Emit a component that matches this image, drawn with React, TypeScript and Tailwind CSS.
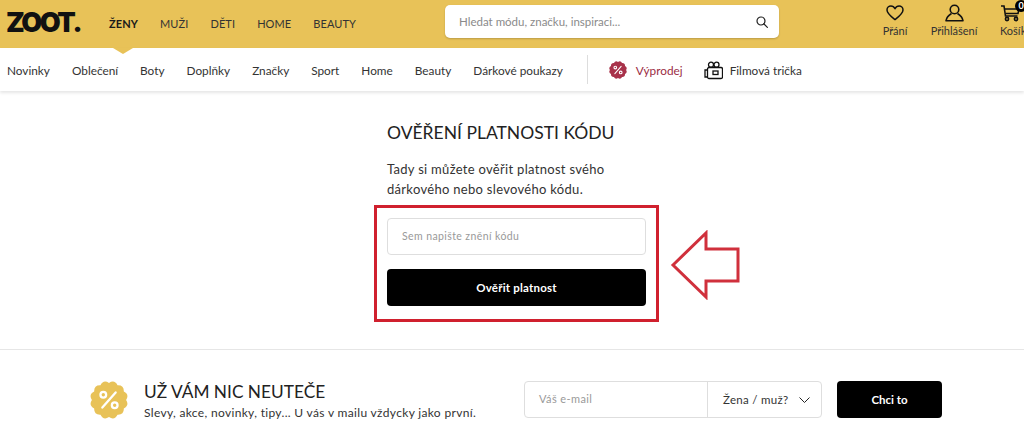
const top = [
  { t: "ŽENY", cls: "font-bold text-[#1a1a1a]" },
  { t: "MUŽI", cls: "text-[#333]" },
  { t: "DĚTI", cls: "text-[#333]" },
  { t: "HOME", cls: "text-[#333]" },
  { t: "BEAUTY", cls: "text-[#333]" },
];
const sub = ["Novinky", "Oblečení", "Boty", "Doplňky", "Značky", "Sport", "Home", "Beauty", "Dárkové poukazy"];

function Badge({ fill, size, pct }: { fill: string; size: number; pct: string }) {
  const n = 12;
  let d = "";
  for (let i = 0; i < n; i++) {
    const a = (i / n) * Math.PI * 2 - Math.PI / 2;
    const b = ((i + 0.5) / n) * Math.PI * 2 - Math.PI / 2;
    const c = ((i + 1) / n) * Math.PI * 2 - Math.PI / 2;
    const p = (r: number, x: number) => `${(20 + r * Math.cos(x)).toFixed(2)} ${(20 + r * Math.sin(x)).toFixed(2)}`;
    if (i === 0) d += `M${p(18, a)} `;
    d += `Q${p(22.5, b)} ${p(18, c)} `;
  }
  return (
    <svg width={size} height={size} viewBox="0 0 40 40" className="shrink-0">
      <path d={d + "Z"} fill={fill} />
      <g stroke={pct} strokeWidth="2.400" fill="none">
        <path d="M27 12 13 28" strokeLinecap="round" />
        <circle cx="14" cy="14.500" r="3" />
        <circle cx="26" cy="25.500" r="3" />
      </g>
    </svg>
  );
}

export default function App() {
  return (
    <div className="relative w-[1024px] h-[439px] overflow-hidden bg-white text-[#222] font-['Lato','Open_Sans',sans-serif]">
      <header className="h-12 bg-[#e8c258] flex items-center relative">
        <div className="ml-[6px] w-[74px] text-[27px] leading-none font-black tracking-[-2.5px] text-[#111] font-['Inter',sans-serif] mt-[-4px] whitespace-nowrap">ZOOT.</div>
        <nav className="ml-[29px] flex gap-[22px] text-[11px] tracking-[0.1px]">
          {top.map((x) => (
            <span key={x.t} className={x.cls}>{x.t}</span>
          ))}
        </nav>
        <div className="absolute left-[445px] top-[5px] w-[334px] h-[33px] bg-white rounded-[5px] shadow-[0_1px_2px_rgba(0,0,0,0.2)] flex items-center pl-[14px] pr-[11px] justify-between">
          <span className="text-[11.5px] text-[#8a8a8a]">Hledat módu, značku, inspiraci...</span>
          <svg width="12" height="12" viewBox="0 0 12 12" fill="none" stroke="#222" strokeWidth="1.200">
            <circle cx="5" cy="5" r="4" />
            <path d="m8 8 3.400 3.400" strokeLinecap="round" />
          </svg>
        </div>
        <div className="absolute left-[881px] top-[5px] flex flex-col items-center w-[28px] text-[11px] text-[#333] leading-[12px]">
          <svg width="18" height="16" viewBox="0 0 19 17" fill="none" stroke="#111" strokeWidth="1.600" strokeLinejoin="round">
            <path d="M9.500 15.500C5 12 1 9 1 5.300 1 2.800 3 1 5.200 1c1.800 0 3.300 1 4.300 3 1-2 2.500-3 4.300-3C16 1 18 2.800 18 5.300c0 3.700-4 6.700-8.500 10.200Z" />
          </svg>
          <span className="mt-[4px] whitespace-nowrap">Přání</span>
        </div>
        <div className="absolute left-[930px] top-[4px] flex flex-col items-center w-[48px] text-[11px] text-[#333] leading-[12px]">
          <svg width="19" height="18" viewBox="0 0 19 18" fill="none" stroke="#111" strokeWidth="1.600">
            <circle cx="9.500" cy="5.500" r="4.300" />
            <path d="M6.500 9.500C4 11 1.500 13.500 1 16.800h17C17.500 13.500 15 11 12.500 9.500" strokeLinejoin="round" />
          </svg>
          <span className="mt-[3px] whitespace-nowrap">Přihlášení</span>
        </div>
        <div className="absolute left-[1000px] top-[4px] w-[28px] text-[11px] text-[#333] leading-[12px]">
          <svg width="20" height="18" viewBox="0 0 20 18" fill="none" stroke="#111" strokeWidth="1.600">
            <path d="M1 2h3l1.500 10h12" />
            <path d="M4.500 5H19l-1 4.500H5.500" />
            <circle cx="7" cy="15" r="1.600" />
            <circle cx="16" cy="15" r="1.600" />
          </svg>
          <span className="block mt-[3px] whitespace-nowrap">Košík</span>
          <span className="absolute left-[15px] top-[-4px] w-[12px] h-[12px] rounded-full bg-black text-white text-[9px] leading-[12px] font-bold text-center">0</span>
        </div>
      </header>

      <div className="h-[43px] bg-white flex items-center shadow-[0_2px_3px_rgba(0,0,0,0.1)] relative pt-[2px]">
        <span className="absolute left-[113px] top-0 w-0 h-0 border-x-[10px] border-x-transparent border-t-[6px] border-t-[#e8c258]" />
        <nav className="ml-[7px] flex gap-[22px] text-[11.8px] text-[#333]">
          {sub.map((s) => (
            <span key={s}>{s}</span>
          ))}
        </nav>
        <span className="ml-[24px] w-px h-[29px] bg-[#ddd] mt-[-2px]" />
        <span className="ml-[21px] mt-[-1px]"><Badge fill="#a8324a" size={18} pct="#fff" /></span>
        <span className="ml-[9px] text-[11.8px] text-[#9b2c44]">Výprodej</span>
        <svg className="ml-[21px] mt-[-1px]" width="19" height="19" viewBox="0 0 19 19" fill="none" stroke="#111" strokeWidth="1.300">
          <circle cx="7" cy="3.700" r="2.500" />
          <circle cx="12.500" cy="3.700" r="2.500" />
          <rect x="3.500" y="6.500" width="15" height="11" rx="1.500" />
          <rect x="9" y="10" width="5" height="3.500" />
          <path d="M3.500 9H1v7h2.500" />
        </svg>
        <span className="ml-[7px] text-[11.8px] text-[#333]">Filmová trička</span>
      </div>

      <main className="h-[259px] border-b border-[#e6e6e6] flex justify-center">
        <div className="w-[259px] ml-[9px] pt-[30px]">
          <h1 className="text-[17.5px] leading-[24px] text-[#222] whitespace-nowrap">OVĚŘENÍ PLATNOSTI KÓDU</h1>
          <p className="mt-[14px] text-[13px] leading-[20px] tracking-[0.3px] text-[#333] whitespace-nowrap">
            Tady si můžete ověřit platnost svého
            <br />
            dárkového nebo slevového kódu.
          </p>
          <div className="mt-[19px] h-[37px] border border-[#dedede] rounded-[4px] flex items-center pl-[14px] text-[10.5px] tracking-[0.4px] text-[#999]">
            Sem napište znění kódu
          </div>
          <button className="mt-[14px] w-full h-[37px] bg-black rounded-[4px] text-white text-[11.5px] font-bold tracking-[0.2px]">
            Ověřit platnost
          </button>
        </div>
      </main>

      <footer className="h-[89px] flex items-start pt-[31px]">
        <div className="ml-[90px]"><Badge fill="#e8c258" size={38} pct="#fff" /></div>
        <div className="ml-[16px] w-[380px]">
          <div className="text-[17.3px] leading-[22px] text-[#222] whitespace-nowrap">UŽ VÁM NIC NEUTEČE</div>
          <div className="text-[12px] leading-[15px] tracking-[0.33px] text-[#333] whitespace-nowrap mt-[2px]">Slevy, akce, novinky, tipy... U vás v mailu vždycky jako první.</div>
        </div>
        <div className="w-[298px] h-[37px] border border-[#dedede] rounded-[4px] flex items-center">
          <span className="w-[182px] pl-[14px] text-[11px] tracking-[0.4px] text-[#999]">Váš e-mail</span>
          <span className="h-full border-l border-[#dedede] pl-[15px] text-[11.5px] tracking-[0.3px] text-[#333] flex items-center gap-[11px]">
            Žena / muž?
            <svg width="11" height="6" viewBox="0 0 11 6" fill="none" stroke="#222" strokeWidth="1">
              <path d="m.5.500 5 5 5-5" />
            </svg>
          </span>
        </div>
        <button className="ml-[15px] w-[105px] h-[37px] bg-black rounded-[4px] text-white text-[11.5px] font-bold">Chci to</button>
      </footer>

      <div className="absolute left-[374px] top-[205px] w-[285px] h-[117px] border-[3px] border-[#d0202e]" />
      <svg className="absolute left-[670px] top-[230px]" width="71" height="70" viewBox="0 0 71 70" fill="none" stroke="#d0303c" strokeWidth="3">
        <path d="M3 35 36 3v16h32v32H36v16Z" />
      </svg>
    </div>
  );
}
